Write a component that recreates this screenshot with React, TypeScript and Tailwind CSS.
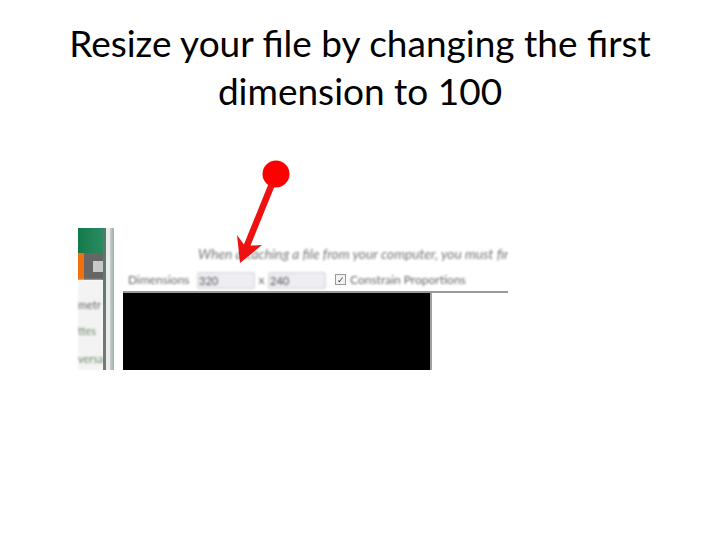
const sideLabels = [
  { text: 'metr', cls: 'mt-[18px] text-[#666]' },
  { text: 'ttes', cls: 'mt-[12px] text-[#6d8a68]' },
  { text: 'versa', cls: 'mt-[14px] text-[#6d8a68]' },
];

function Sidebar() {
  return (
    <div className="flex w-[36px] shrink-0">
      <div className="flex w-[25px] shrink-0 flex-col">
        <div className="h-[25px] bg-gradient-to-r from-[#0f7a4a] to-[#2c8a62]" />
        <div className="flex h-[27px]">
          <div className="w-[6px] bg-[#f0700f]" />
          <div className="flex flex-1 items-center justify-end bg-[#666666]">
            <div className="h-[11px] w-[10px] bg-[#c8c8c8] blur-[0.5px]" />
          </div>
        </div>
        <div className="flex flex-1 flex-col whitespace-nowrap bg-[#f3f3f3] text-[11px] leading-[14px] blur-[0.8px]">
          {sideLabels.map(l => (
            <div key={l.text} className={l.cls}>{l.text}</div>
          ))}
        </div>
      </div>
      <div className="w-[3px] bg-gradient-to-b from-[#4f7d68] to-[#777777] blur-[0.4px]" />
      <div className="w-[4px] bg-[#ececec]" />
      <div className="w-[4px] bg-gradient-to-r from-[#c5ceca] to-[#a3aeaa] blur-[0.4px]" />
    </div>
  );
}

function DimInput({ value }: { value: string }) {
  return (
    <div className="h-[17px] w-[58px] rounded-[2px] border border-[#d4d4d4] bg-[#ededf2] pl-[1px] text-[11px] leading-[15px] text-[#555]">
      {value}
    </div>
  );
}

function UploadPanel() {
  return (
    <div className="ml-[9px] flex min-w-0 flex-1 flex-col">
      <div className="h-[44px] overflow-hidden whitespace-nowrap pl-[75px] pt-[18px] text-[13.75px] italic leading-[16px] text-[#777] blur-[0.9px]">
        When attaching a file from your computer, you must fir
      </div>
      <div className="flex h-[21px] items-start border-b-2 border-[#9a9a9a] pl-[5px] text-[12px] leading-[16px] text-[#666]">
        <span className="w-[69px] blur-[0.9px]">Dimensions</span>
        <div className="blur-[0.9px]"><DimInput value="320" /></div>
        <span className="w-[13px] text-center blur-[0.9px]">x</span>
        <div className="blur-[0.9px]"><DimInput value="240" /></div>
        <div className="ml-[9px] mt-[2px] h-[11px] w-[11px] border border-[#999] bg-[#f2f2f2] text-center text-[9px] leading-[9px] text-[#444] blur-[0.7px]">✓</div>
        <span className="ml-[4px] whitespace-nowrap blur-[0.9px]">Constrain Proportions</span>
      </div>
      <div className="h-[77px] w-[309px] border-r-2 border-[#a0a0a0] bg-black" />
    </div>
  );
}

export default function App() {
  return (
    <div className="relative h-[540px] w-[720px] overflow-hidden bg-white font-['Lato','Noto_Sans',sans-serif] text-black">
      <h1 className="pt-[19px] text-center text-[37px] leading-[48px]">
        Resize your file by changing the first
        <br />
        dimension to 100
      </h1>
      <div className="ml-[78px] mt-[113px] flex h-[142px] w-[430px]">
        <Sidebar />
        <UploadPanel />
      </div>
      <svg className="absolute left-0 top-0" width="720" height="540" viewBox="0 0 720 540">
        <circle cx="276" cy="174" r="13.5" fill="#ff0000" />
        <path d="M272 184 L246 248" stroke="#ee1111" strokeWidth="6.5" />
        <path d="M240 263 L237 235 L245 246 L262 245 Z" fill="#ee1111" />
      </svg>
    </div>
  );
}
